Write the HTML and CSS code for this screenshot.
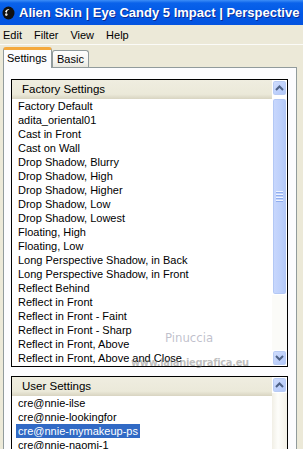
FILE: index.html
```html
<!DOCTYPE html>
<html lang="en">
<head>
    <meta charset="UTF-8">
    <title>Alien Skin | Eye Candy 5 Impact | Perspective</title>
    <link rel="stylesheet" href="styles.css">
</head>
<body>
    <div class="titlebar">
        <svg class="logo" width="13" height="14" viewBox="0 0 13 14">
            <ellipse cx="6.5" cy="7" rx="6" ry="6.5" fill="#111"/>
            <path d="M3 5.5 Q4.5 2.5 7.5 3 Q5 4 4.5 7 Z" fill="#fff"/>
            <circle cx="4.3" cy="8.6" r="1.3" fill="#ddd"/>
        </svg>
        <span>Alien Skin | Eye Candy 5 Impact | Perspective</span>
    </div>

    <div class="menubar">
        <span>Edit</span>
        <span>Filter</span>
        <span>View</span>
        <span>Help</span>
    </div>

    <div class="tabs">
        <div class="tab active">Settings</div>
        <div class="tab">Basic</div>
    </div>

    <div class="panel">
        <div class="listbox factory">
            <div class="list-main">
                <div class="list-head">Factory Settings</div>
                <ul class="items">
                    <li><span>Factory Default</span></li>
                    <li><span>adita_oriental01</span></li>
                    <li><span>Cast in Front</span></li>
                    <li><span>Cast on Wall</span></li>
                    <li><span>Drop Shadow, Blurry</span></li>
                    <li><span>Drop Shadow, High</span></li>
                    <li><span>Drop Shadow, Higher</span></li>
                    <li><span>Drop Shadow, Low</span></li>
                    <li><span>Drop Shadow, Lowest</span></li>
                    <li><span>Floating, High</span></li>
                    <li><span>Floating, Low</span></li>
                    <li><span>Long Perspective Shadow, in Back</span></li>
                    <li><span>Long Perspective Shadow, in Front</span></li>
                    <li><span>Reflect Behind</span></li>
                    <li><span>Reflect in Front</span></li>
                    <li><span>Reflect in Front - Faint</span></li>
                    <li><span>Reflect in Front - Sharp</span></li>
                    <li><span>Reflect in Front, Above</span></li>
                    <li><span>Reflect in Front, Above and Close</span></li>
                </ul>
            </div>
            <div class="scrollbar">
                <div class="sb-btn">
                    <svg width="9" height="6" viewBox="0 0 9 6"><polyline points="1,5 4.5,1.5 8,5" fill="none" stroke="#4d6185" stroke-width="2"/></svg>
                </div>
                <div class="sb-thumb">
                    <i></i><i></i><i></i><i></i>
                </div>
                <div class="sb-track"></div>
                <div class="sb-btn">
                    <svg width="9" height="6" viewBox="0 0 9 6"><polyline points="1,1 4.5,4.5 8,1" fill="none" stroke="#4d6185" stroke-width="2"/></svg>
                </div>
            </div>
        </div>

        <div class="listbox user">
            <div class="list-main">
                <div class="list-head">User Settings</div>
                <ul class="items">
                    <li><span>cre@nnie-ilse</span></li>
                    <li><span>cre@nnie-lookingfor</span></li>
                    <li class="selected"><span>cre@nnie-mymakeup-ps</span></li>
                    <li><span>cre@nnie-naomi-1</span></li>
                </ul>
            </div>
            <div class="scrollbar">
                <div class="sb-btn">
                    <svg width="9" height="6" viewBox="0 0 9 6"><polyline points="1,5 4.5,1.5 8,5" fill="none" stroke="#4d6185" stroke-width="2"/></svg>
                </div>
                <div class="sb-track beige"></div>
            </div>
        </div>
    </div>

    <div class="watermark name">Pinuccia</div>
    <div class="watermark site">www.lalaniegrafica.eu</div>
</body>
</html>
```

FILE: styles.css
```css
* {
    box-sizing: border-box;
    margin: 0;
    padding: 0;
}

body {
    width: 303px;
    height: 449px;
    overflow: hidden;
    position: relative;
    background: #ece9d8;
    font-family: "Liberation Sans", Arial, sans-serif;
    font-size: 11px;
    color: #000;
}

.titlebar {
    height: 25px;
    display: flex;
    align-items: center;
    gap: 4px;
    padding-left: 2px;
    background: linear-gradient(#3d8ef7 0, #0a62ea 3px, #0058e6 55%, #0553df 100%);
    color: #fff;
    font-size: 13px;
    font-weight: bold;
    white-space: nowrap;
    overflow: hidden;
}

.titlebar span {
    text-shadow: 1px 1px 0 #0c2a94;
}

.logo {
    flex-shrink: 0;
}

.menubar {
    height: 20px;
    display: flex;
    align-items: center;
    gap: 12px;
    padding-left: 3px;
    border-bottom: 1px solid #fbfbf8;
}

.tabs {
    height: 22px;
    display: flex;
    align-items: flex-end;
    padding-left: 3px;
    position: relative;
    z-index: 1;
}

.tab {
    height: 17px;
    line-height: 16px;
    padding: 0 4px;
    border: 1px solid #919b9c;
    border-bottom: none;
    border-radius: 3px 3px 0 0;
    background: linear-gradient(#fefefe, #f4f3ee 70%, #e9e7de);
    margin-bottom: 0;
    width: 37px;
}

.tab.active {
    width: 49px;
    height: 21px;
    padding: 0 3px;
    border-top: 3px solid #f4a93d;
    line-height: 17px;
    background: #fcfcfe;
    margin-bottom: -1px;
}

.panel {
    margin-left: 3px;
    width: 294px;
    height: 400px;
    border: 1px solid #919b9c;
    background: #fcfcfe;
    padding: 11px 8px 0 7px;
}

.listbox {
    width: 277px;
    display: flex;
    border: 1px solid #000;
    background: #fff;
}

.factory {
    height: 288px;
}

.user {
    margin-top: 9px;
    height: 120px;
}

.list-main {
    flex: 1;
    overflow: hidden;
}

.list-head {
    height: 19px;
    line-height: 18px;
    padding-left: 10px;
    background: linear-gradient(#efede0, #ebe9d9 75%, #d8d4c1);
    font-size: 11.5px;
}

.items {
    list-style: none;
}

.items li {
    height: 14px;
    line-height: 14px;
    padding-left: 4px;
    white-space: nowrap;
}

.items li span {
    padding: 0 2px;
}

.items li.selected span {
    display: inline-block;
    background: #316ac5;
    color: #fff;
    height: 14px;
}

.scrollbar {
    width: 15px;
    display: flex;
    flex-direction: column;
}

.sb-btn {
    height: 16px;
    display: flex;
    align-items: center;
    justify-content: center;
    border: 1px solid #fff;
    border-radius: 3px;
    background: linear-gradient(135deg, #d2defc, #bccffb 60%, #b0c6f7);
    box-shadow: inset 0 0 0 1px #b8cbf4;
}

.sb-thumb {
    height: 197px;
    margin-top: 2px;
    border: 1px solid #fff;
    border-radius: 3px;
    background: linear-gradient(to right, #c9d8fd, #bdd0fb 60%, #b2c7f7);
    box-shadow: inset 0 0 0 1px #b3c8f5;
    display: flex;
    flex-direction: column;
    align-items: center;
    justify-content: center;
    gap: 1px;
}

.sb-thumb i {
    display: block;
    width: 7px;
    height: 1px;
    background: #eef3fe;
    border-bottom: 1px solid #8fadef;
    box-sizing: content-box;
}

.sb-track {
    flex: 1;
    background: #fbfbf8;
}

.sb-track.beige {
    background: linear-gradient(to right, #f1efe6, #fdfdfa 40%, #f3f1e7);
}

.watermark {
    position: absolute;
    font-family: "DejaVu Sans Condensed", "DejaVu Sans", sans-serif;
    white-space: nowrap;
}

.watermark.name {
    left: 165px;
    top: 330px;
    font-size: 13px;
    color: rgba(150, 150, 170, 0.6);
}

.watermark.site {
    left: 131px;
    top: 356px;
    font-size: 11px;
    font-weight: bold;
    letter-spacing: -0.3px;
    color: rgba(110, 110, 110, 0.45);
}
```
